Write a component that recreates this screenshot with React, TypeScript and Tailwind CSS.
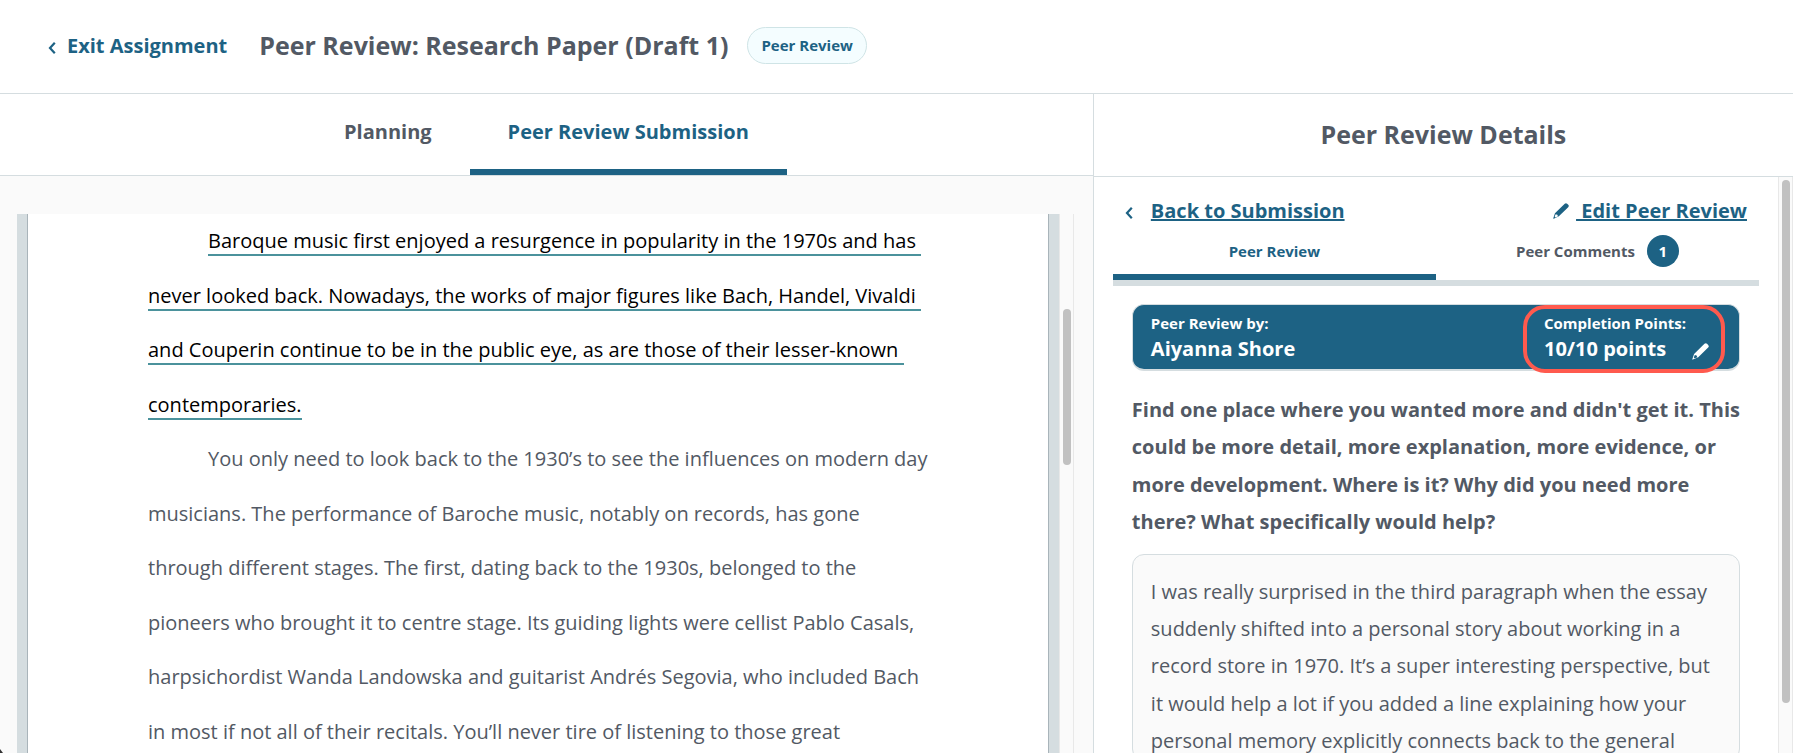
import React from "react";

function Pencil({ className }: { className: string }) {
  return (
    <svg viewBox="0 0 18 18" className={className} fill="currentColor" aria-hidden="true">
      <path
        fillRule="evenodd"
        d="M13.2 .9 Q14.6 -.3 15.9 .9 L17.1 2.1 Q18.4 3.5 17.1 4.8 L6.6 15 L.9 17.6 Q.2 17.8 .4 17 L2.2 11.6 Z M3 12.6 L1.9 15.3 L2.9 16.2 L5.6 15 L4.9 13.3 Z"
      />
    </svg>
  );
}

function Chevron({ className }: { className: string }) {
  return (
    <svg viewBox="0 0 8 12" className={className} fill="none" stroke="currentColor" strokeWidth="2.2" aria-hidden="true">
      <path d="M6.8 .8 L2 6 L6.8 11.2" />
    </svg>
  );
}

export default function App() {
  return (
    <div className="relative flex h-screen flex-col overflow-hidden bg-white font-['Open_Sans',sans-serif] text-[#525964]">
      <header className="flex h-[94px] shrink-0 items-center border-b border-[#d5dde0] pb-0.5 pl-12">
        <a href="#exit" className="flex items-center gap-[11px] text-xl font-bold text-[#1d6284]">
          <Chevron className="mt-1 h-3 w-2" />
          Exit Assignment
        </a>
        <h1 className="ml-8 text-[25px] font-bold">Peer Review: Research Paper (Draft 1)</h1>
        <span className="ml-[19px] flex h-[37px] items-center rounded-full border border-[#cfe4e6] bg-[#f4fdff] px-[13px] text-[15px] font-bold text-[#1d6284]">
          Peer Review
        </span>
      </header>

      <div className="flex min-h-0 flex-1">
        <main className="flex w-[60.95%] flex-col bg-[#fafafa]">
          <nav className="flex h-[82px] shrink-0 justify-center border-b border-[#d5dde0] bg-white text-xl font-bold">
            <button className="border-b-[6px] border-transparent px-[38px]">Planning</button>
            <button className="border-b-[6px] border-[#1d6284] px-[38px] text-[#1d6284]">Peer Review Submission</button>
          </nav>
          <div className="mt-[38px] mr-[19px] ml-[17px] flex min-h-0 flex-1">
            <div className="min-w-0 flex-1 overflow-hidden border-x-[10px] border-[#d5dde0]">
              <article className="border-x border-[#a9b4ba] bg-white px-[120px] text-xl leading-[2.725] whitespace-pre-wrap">
                <p className="indent-[60px] text-black">
                  <span className="border-b-2 border-[#4b929c]">Baroque music first enjoyed a resurgence in popularity in the 1970s and has never looked back. Nowadays, the works of major figures like Bach, Handel, Vivaldi and Couperin continue to be in the public eye, as are those of their lesser-known contemporaries.</span>
                </p>
                <p className="indent-[60px]">You only need to look back to the 1930’s to see the influences on modern day musicians. The performance of Baroche music, notably on records, has gone through different stages. The first, dating back to the 1930s, belonged to the pioneers who brought it to centre stage. Its guiding lights were cellist Pablo Casals, harpsichordist Wanda Landowska and guitarist Andrés Segovia, who included Bach in most if not all of their recitals. You’ll never tire of listening to those great</p>
              </article>
            </div>
            <div className="w-[15px] border-x border-[#e8e8e8] bg-[#fafafa] px-[3px] pt-[95px]">
              <div className="h-[156px] w-2 rounded-full bg-[#c1c1c1]" />
            </div>
          </div>
        </main>

        <aside className="flex w-[39.05%] flex-col border-l border-[#d5dde0]">
          <h2 className="flex h-[83px] shrink-0 items-center justify-center border-b border-[#d5dde0] text-[25px] font-bold">
            Peer Review Details
          </h2>
          <div className="flex min-h-0 flex-1">
            <div className="min-w-0 flex-1 overflow-hidden px-[19px] pt-5">
              <div className="flex items-center justify-between px-3 text-xl font-bold text-[#1d6284]">
                <a href="#submission" className="flex items-center gap-[18px]">
                  <Chevron className="mt-1 h-3 w-2" />
                  <span className="underline decoration-2">Back to Submission</span>
                </a>
                <a href="#edit" className="flex items-center gap-[7px]">
                  <Pencil className="h-4 w-4" />
                  <span className="whitespace-pre underline decoration-2"> Edit Peer Review</span>
                </a>
              </div>
              <div className="mt-[3px] flex border-b-[6px] border-[#d5dde0] text-[15px] font-bold">
                <button className="h-[52px] flex-1 border-b-[6px] border-[#1d6284] text-[#1d6284]">Peer Review</button>
                <button className="flex h-[52px] flex-1 items-center justify-center gap-3 border-b-[6px] border-transparent">
                  Peer Comments
                  <span className="flex size-8 items-center justify-center rounded-full bg-[#1d6284] text-white">1</span>
                </button>
              </div>

              <div className="px-[19px] pt-[18px]">
                <section className="relative flex justify-between rounded-xl border border-b-2 border-[#d5dde0] bg-[#1d6284] pt-2 pb-1.5 pr-[15px] pl-[18px] font-bold text-white">
                  <div>
                    <p className="text-[15px] leading-5">Peer Review by:</p>
                    <p className="mt-0.5 text-xl leading-7">Aiyanna Shore</p>
                  </div>
                  <div className="w-[180px]">
                    <p className="text-[15px] leading-5">Completion Points:</p>
                    <div className="mt-0.5 flex items-center gap-[26px] text-xl leading-7">
                      10/10 points
                      <button aria-label="Edit points" className="mt-1"><Pencil className="h-[17px] w-[17px]" /></button>
                    </div>
                  </div>
                  <div className="pointer-events-none absolute top-0 right-[14px] h-[68px] w-[202px] rounded-[22px] border-4 border-[#ff5a4e]" />
                </section>
                <h3 className="mt-5 text-xl leading-[1.87] font-bold">
                  Find one place where you wanted more and didn't get it. This could be more detail, more explanation, more evidence, or more development. Where is it? Why did you need more there? What specifically would help?
                </h3>
                <div className="mt-[13px] rounded-xl border border-[#d5dde0] bg-[#fafafa] px-[18px] pt-[18px] text-xl leading-[1.87]">
                  I was really surprised in the third paragraph when the essay suddenly shifted into a personal story about working in a record store in 1970. It’s a super interesting perspective, but it would help a lot if you added a line explaining how your personal memory explicitly connects back to the general
                </div>
              </div>
            </div>
            <div className="w-[15px] border-x border-[#e8e8e8] bg-[#fafafa] px-[3px] pt-[3px]">
              <div className="h-[523px] w-2 rounded-full bg-[#c1c1c1]" />
            </div>
          </div>
        </aside>
      </div>
      <svg viewBox="0 0 3 4" className="absolute bottom-0 left-0 h-1 w-[3px]" fill="#333" aria-hidden="true">
        <path d="M0 0 L3 4 H0 Z" />
      </svg>
    </div>
  );
}
